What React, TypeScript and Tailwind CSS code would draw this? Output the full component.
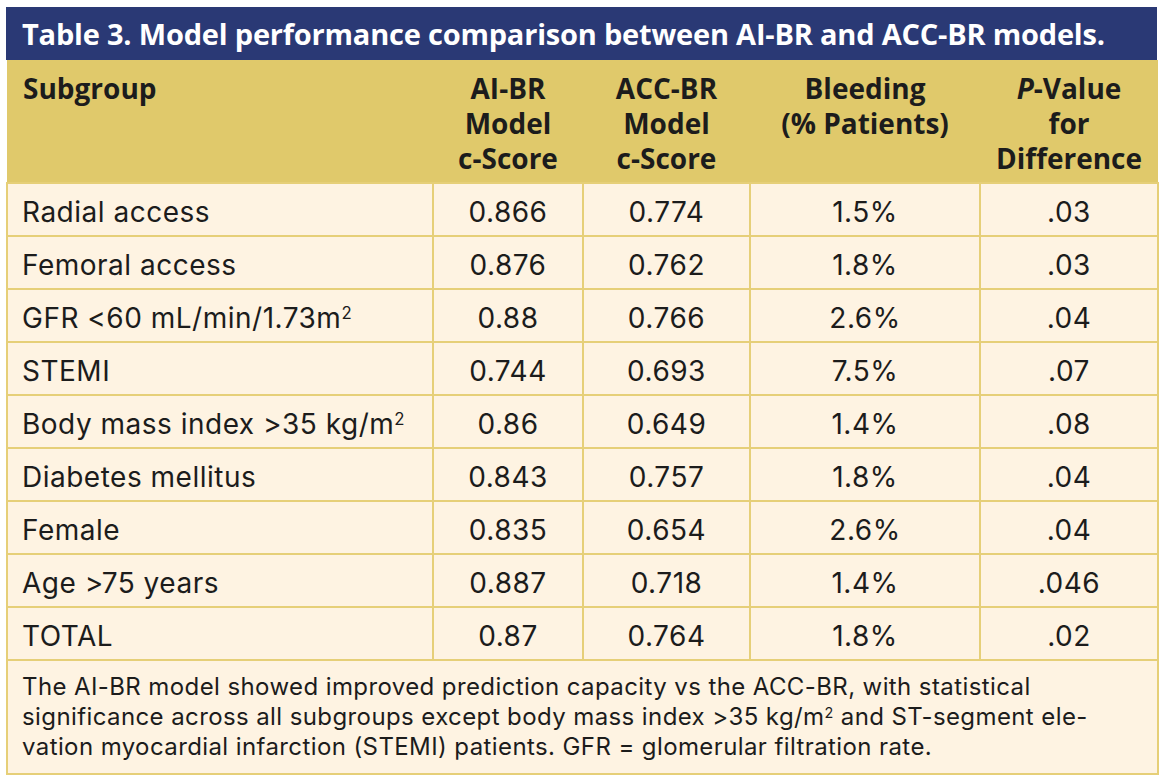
import React from 'react';

const Sq = () => <sup className="text-[0.6em] leading-none">2</sup>;

const rows: [React.ReactNode, string, string, string, string][] = [
  ['Radial access', '0.866', '0.774', '1.5%', '.03'],
  ['Femoral access', '0.876', '0.762', '1.8%', '.03'],
  [<>GFR &lt;60 mL/min/1.73m<Sq /></>, '0.88', '0.766', '2.6%', '.04'],
  ['STEMI', '0.744', '0.693', '7.5%', '.07'],
  [<>Body mass index &gt;35 kg/m<Sq /></>, '0.86', '0.649', '1.4%', '.08'],
  ['Diabetes mellitus', '0.843', '0.757', '1.8%', '.04'],
  ['Female', '0.835', '0.654', '2.6%', '.04'],
  ['Age >75 years', '0.887', '0.718', '1.4%', '.046'],
  ['TOTAL', '0.87', '0.764', '1.8%', '.02'],
];

const body = { fontFamily: 'Inter, sans-serif' };

const App = () => {
  return (
    <div className="min-h-screen bg-white pl-[6px] pt-[7px] text-[#1c1c1c]" style={{ fontFamily: '"Open Sans", sans-serif' }}>
      <div className="w-[1151px]">
        <div className="h-[53px] bg-[#2a3975] pl-[16px] flex items-center text-white font-bold text-[29px] tracking-[-0.2px]">
          Table 3. Model performance comparison between AI-BR and ACC-BR models.
        </div>
        <table className="w-full table-fixed border-collapse">
          <colgroup>
            <col className="w-[426px]" />
            <col className="w-[150px]" />
            <col className="w-[167px]" />
            <col className="w-[230px]" />
            <col className="w-[178px]" />
          </colgroup>
          <thead>
            <tr className="bg-[#e0c96b] h-[123px] align-top font-bold text-[28px] leading-[35px]">
              <th className="text-left pl-[16px] pt-[11px] font-bold">Subgroup</th>
              <th className="pt-[11px] font-bold">AI-BR<br />Model<br />c-Score</th>
              <th className="pt-[11px] font-bold">ACC-BR<br />Model<br />c-Score</th>
              <th className="pt-[11px] font-bold">Bleeding<br />(% Patients)</th>
              <th className="pt-[11px] font-bold"><i>P</i>-Value<br />for<br />Difference</th>
            </tr>
          </thead>
          <tbody className="bg-[#fef3e2] text-[28px] tracking-[0.5px]" style={body}>
            {rows.map((r, i) => (
              <tr key={i} className="h-[53px]">
                <td className="border-2 border-[#e6cf78] pl-[14px] pt-[4px] pb-0">{r[0]}</td>
                <td className="border-2 border-[#e6cf78] text-center pt-[4px] pb-0">{r[1]}</td>
                <td className="border-2 border-[#e6cf78] text-center pt-[4px] pb-0">{r[2]}</td>
                <td className="border-2 border-[#e6cf78] text-center pt-[4px] pb-0">{r[3]}</td>
                <td className="border-2 border-[#e6cf78] text-center pt-[4px] pb-0">{r[4]}</td>
              </tr>
            ))}
            <tr>
              <td colSpan={5} className="border-2 border-[#e6cf78] pl-[14px] pt-[11px] pb-[11px] text-[24px] leading-[30px] tracking-[0.4px]">
                The AI-BR model showed improved prediction capacity vs the ACC-BR, with statistical<br />
                significance across all subgroups except body mass index &gt;35 kg/m<Sq /> and ST-segment ele-<br />
                vation myocardial infarction (STEMI) patients. GFR = glomerular filtration rate.
              </td>
            </tr>
          </tbody>
        </table>
      </div>
    </div>
  );
};

export default App;
